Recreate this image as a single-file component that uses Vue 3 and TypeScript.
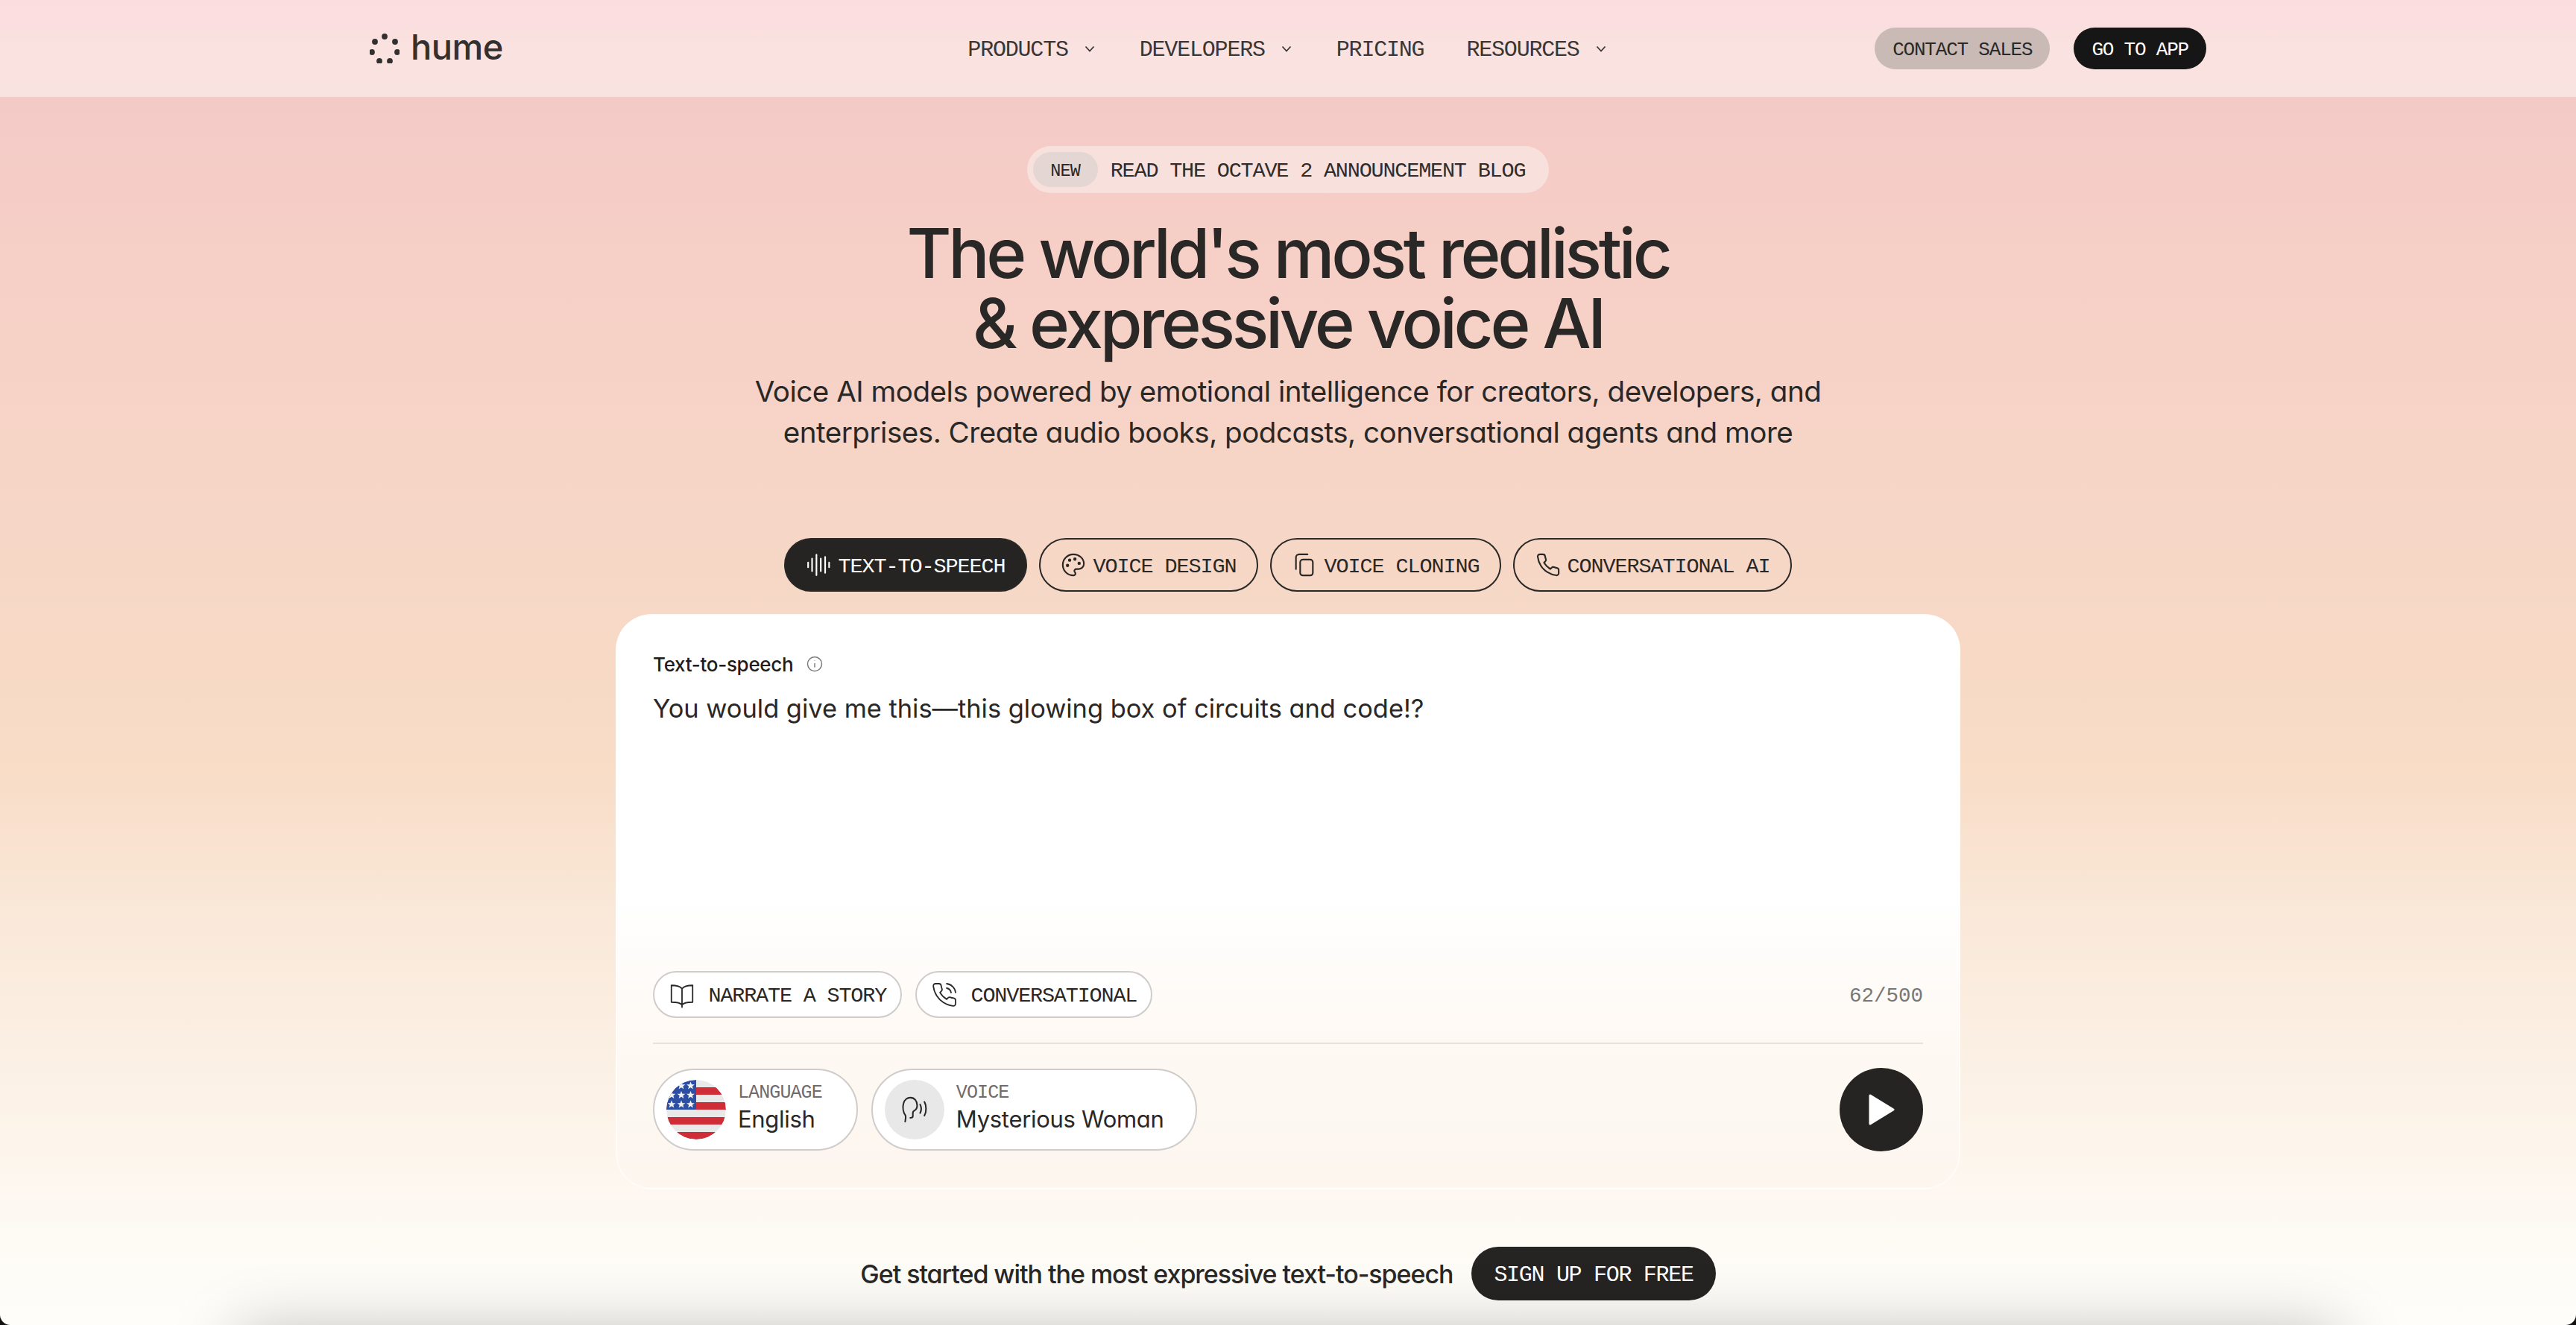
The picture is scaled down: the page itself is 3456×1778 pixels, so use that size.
<script setup lang="ts">
interface NavItem {
  label: string;
  menu: boolean;
}

const navItems: NavItem[] = [
  { label: 'PRODUCTS', menu: true },
  { label: 'DEVELOPERS', menu: true },
  { label: 'PRICING', menu: false },
  { label: 'RESOURCES', menu: true },
];

const logoDots = [
  [516, 47], [503, 54], [530, 54], [499, 68], [533, 68], [509, 80], [523, 80],
];

const stars = [
  [20, 8], [32.5, 8],
  [7, 20.5], [20, 20.5], [32.5, 20.5],
  [7, 33], [20, 33], [32.5, 33],
];
</script>

<template>
  <div class="page">
    <header class="topbar">
      <a class="logo">
        <svg class="logo__mark" viewBox="496 43 40 40" width="40" height="40">
          <circle v-for="(d, i) in logoDots" :key="i" :cx="d[0]" :cy="d[1]" r="3.9" />
        </svg>
        <span class="logo__word">hume</span>
      </a>

      <nav class="nav">
        <a v-for="item in navItems" :key="item.label" class="nav__item">
          <span class="nudge">{{ item.label }}</span>
          <svg v-if="item.menu" class="nav__chev" viewBox="0 0 20 20" width="20" height="20">
            <path d="M4.500 7.500 10 13.500l5.500-6" />
          </svg>
        </a>
      </nav>

      <div class="topbar__actions">
        <a class="btn btn--soft"><span class="nudge">CONTACT SALES</span></a>
        <a class="btn btn--dark"><span class="nudge">GO TO APP</span></a>
      </div>
    </header>

    <main class="hero">
      <a class="announce">
        <span class="announce__tag"><span class="nudge">NEW</span></span>
        <span class="announce__text nudge">READ THE OCTAVE 2 ANNOUNCEMENT BLOG</span>
      </a>

      <h1 class="hero__title">The world's most realistic<br />&amp; expressive voice AI</h1>
      <p class="hero__sub">
        Voice AI models powered by emotional intelligence for creators, developers, and<br />
        enterprises. Create audio books, podcasts, conversational agents and more
      </p>

      <div class="tabs">
        <button class="tab tab--active">
          <svg class="tab__icon" viewBox="0 0 32 32" width="34" height="34">
            <path d="M3 13v6M8 8v16M13.500 3v26M19 8v16M24.500 6v20M29.500 13v6" />
          </svg>
          <span class="nudge">TEXT-TO-SPEECH</span>
        </button>
        <button class="tab">
          <svg class="tab__icon" viewBox="0 0 24 24" width="34" height="34">
            <path d="M12 22a1 1 0 0 1 0-20 10 9 0 0 1 10 9 5 5 0 0 1-5 5h-2.250a1.750 1.750 0 0 0-1.400 2.800l.3.4a1.750 1.750 0 0 1-1.400 2.800z" />
            <circle class="dot" cx="13.500" cy="6.500" r=".8" />
            <circle class="dot" cx="17.500" cy="10.500" r=".8" />
            <circle class="dot" cx="6.500" cy="12.500" r=".8" />
            <circle class="dot" cx="8.500" cy="7.500" r=".8" />
          </svg>
          <span class="nudge">VOICE DESIGN</span>
        </button>
        <button class="tab">
          <svg class="tab__icon" viewBox="0 0 24 24" width="34" height="34">
            <rect x="8" y="7" width="12" height="15" rx="2.500" />
            <path d="M4 16V5a3 3 0 0 1 3-3h8" />
          </svg>
          <span class="nudge">VOICE CLONING</span>
        </button>
        <button class="tab">
          <svg class="tab__icon" viewBox="0 0 24 24" width="34" height="34">
            <path d="M22 16.920v3a2 2 0 0 1-2.180 2 19.790 19.790 0 0 1-8.630-3.070 19.500 19.500 0 0 1-6-6 19.790 19.790 0 0 1-3.070-8.670A2 2 0 0 1 4.110 2h3a2 2 0 0 1 2 1.720 12.840 12.840 0 0 0 .7 2.810 2 2 0 0 1-.45 2.110L8.090 9.910a16 16 0 0 0 6 6l1.270-1.270a2 2 0 0 1 2.110-.45 12.840 12.840 0 0 0 2.810.7A2 2 0 0 1 22 16.920z" />
          </svg>
          <span class="nudge">CONVERSATIONAL AI</span>
        </button>
      </div>

      <section class="card">
        <div class="card__label">
          <span>Text-to-speech</span>
          <svg class="info" viewBox="0 0 22 22" width="22" height="22">
            <circle cx="11" cy="11" r="9.500" />
            <path d="M11 10v5.500M11 6.500v.6" />
          </svg>
        </div>
        <div class="card__text">You would give me this—this glowing box of circuits and code!?</div>

        <div class="card__chips">
          <button class="chip">
            <svg class="chip__icon" viewBox="0 0 24 24" width="36" height="36">
              <path d="M12 6.500C10.500 4.500 8 3.500 2.500 3.500v15c5.500 0 8 .5 9.500 2.500 1.500-2 4-2.500 9.500-2.500v-15c-5.500 0-8 1-9.500 3zM12 6.500V23" />
            </svg>
            <span class="nudge">NARRATE A STORY</span>
          </button>
          <button class="chip">
            <svg class="chip__icon" viewBox="0 0 24 24" width="36" height="36">
              <path d="M22 16.920v3a2 2 0 0 1-2.180 2 19.790 19.790 0 0 1-8.630-3.070 19.500 19.500 0 0 1-6-6 19.790 19.790 0 0 1-3.070-8.670A2 2 0 0 1 4.110 2h3a2 2 0 0 1 2 1.720 12.840 12.840 0 0 0 .7 2.810 2 2 0 0 1-.45 2.110L8.090 9.910a16 16 0 0 0 6 6l1.270-1.270a2 2 0 0 1 2.110-.45 12.840 12.840 0 0 0 2.810.7A2 2 0 0 1 22 16.920z" />
              <path d="M14.050 2a9 9 0 0 1 8 7.940M14.050 6A5 5 0 0 1 18 10" />
            </svg>
            <span class="nudge">CONVERSATIONAL</span>
          </button>
          <span class="counter nudge">62/500</span>
        </div>

        <div class="card__controls">
          <button class="picker">
            <svg class="picker__media" viewBox="0 0 80 80" width="80" height="80">
              <defs>
                <clipPath id="flag-clip"><circle cx="40" cy="40" r="40" /></clipPath>
              </defs>
              <g clip-path="url(#flag-clip)">
                <rect width="80" height="80" fill="#e9e9e9" />
                <rect v-for="y in [10, 30, 50, 70]" :key="y" y="0" width="80" height="10" :transform="`translate(0 ${y})`" fill="#cf2e38" />
                <rect width="40" height="40" fill="#2c4fa3" />
                <polygon
                  v-for="(s, i) in stars"
                  :key="i"
                  :transform="`translate(${s[0]} ${s[1]})`"
                  fill="#f1f1f1"
                  points="0,-5.500 1.500,-1.700 5.400,-1.700 2.300,.7 3.400,4.500 0,2.300 -3.400,4.500 -2.300,.7 -5.400,-1.700 -1.500,-1.700"
                />
              </g>
            </svg>
            <span class="picker__body">
              <span class="picker__kicker">LANGUAGE</span>
              <span class="picker__value">English</span>
            </span>
          </button>
          <button class="picker">
            <span class="picker__media picker__media--voice">
              <svg viewBox="0 0 40 40" width="46" height="46">
                <path d="M9 34c.5-3 1-5 .5-7C6.500 23 6 17 7 13c1-5 5-7 8-7 5 0 8 4 8 9 0 3-1 5-3 6-1.500 .7-2 1.500-2 3v3.500c0 1.500-1 2-3 2" />
                <path d="M26.500 14c1.500 3 1.500 7 0 10M31.500 11c2.500 4 2.500 12 0 16" />
              </svg>
            </span>
            <span class="picker__body">
              <span class="picker__kicker">VOICE</span>
              <span class="picker__value">Mysterious Woman</span>
            </span>
          </button>
          <button class="play" aria-label="Play">
            <svg viewBox="0 0 40 48" width="40" height="48">
              <path d="M5 5 36 24 5 43z" />
            </svg>
          </button>
        </div>
      </section>

      <div class="cta">
        <span class="cta__text">Get started with the most expressive text-to-speech</span>
        <a class="cta__btn"><span class="nudge">SIGN UP FOR FREE</span></a>
      </div>

      <div class="next-panel"></div>
    </main>
  </div>
</template>

<style>
html,
body {
  margin: 0;
  background: #111;
}
</style>

<style scoped>
.page {
  height: 1778px;
  overflow: hidden;
  border-radius: 0 0 14px 14px;
  color: #2a2827;
  font-family: Inter, "Noto Sans", sans-serif;
  font-feature-settings: "cv11" 1;
  background: linear-gradient(
    180deg,
    #f4cac6 0,
    #f4cac6 130px,
    #f6cfc6 340px,
    #f6d6c6 680px,
    #f8dcc6 1020px,
    #fae9da 1247px,
    #fcf2e7 1474px,
    #fefcf7 1700px,
    #fefdf9 1778px
  );
}

/* mono caps sit a touch high in Liberation Mono */
.nudge {
  display: block;
  padding-top: 4px;
}

.topbar {
  height: 130px;
  box-sizing: border-box;
  padding: 0 496px;
  display: grid;
  grid-template-columns: 1fr auto 1fr;
  align-items: center;
  background: linear-gradient(180deg, #fbdde0 0, #fbdee0 30px, #f9e2df 60px, #f9e3df 130px);
}

.logo {
  display: flex;
  align-items: center;
  gap: 15px;
}

.logo__mark circle {
  fill: #33302f;
}

.logo__word {
  font-size: 47px;
  font-weight: 500;
  line-height: 1;
  letter-spacing: -0.5px;
  color: #33302f;
  margin-top: -6px;
}

.nav {
  display: flex;
  gap: 57px;
}

.nav__item {
  display: flex;
  align-items: center;
  font-family: "Liberation Mono", monospace;
  font-size: 30px;
  letter-spacing: -1.2px;
  color: #3a3634;
}

.nav__chev {
  margin-left: 19px;
  fill: none;
  stroke: #3a3634;
  stroke-width: 1.800;
}

.topbar__actions {
  display: flex;
  justify-content: flex-end;
  gap: 32px;
}

.btn {
  height: 56px;
  display: flex;
  align-items: center;
  padding: 0 24px;
  border-radius: 28px;
  font-family: "Liberation Mono", monospace;
  font-size: 26px;
  letter-spacing: -1.2px;
}

.btn--soft {
  background: #c9bab6;
  color: #2a2827;
}

.btn--dark {
  background: #161616;
  color: #fff;
}

.hero {
  display: flex;
  flex-direction: column;
  align-items: center;
}

.announce {
  margin-top: 66px;
  height: 63px;
  box-sizing: border-box;
  padding: 0 32px 0 8px;
  display: flex;
  align-items: center;
  gap: 17px;
  border-radius: 32px;
  background: #f8e0dc;
  font-family: "Liberation Mono", monospace;
}

.announce__tag {
  width: 87px;
  height: 47px;
  display: flex;
  align-items: center;
  justify-content: center;
  border-radius: 24px;
  background: #e4d6d2;
  font-size: 23.500px;
  letter-spacing: -0.8px;
}

.announce__text {
  font-size: 28.500px;
  letter-spacing: -1.2px;
  color: #2f2c2b;
}

.hero__title {
  margin: 34px 0 0;
  font-size: 92px;
  line-height: 94px;
  font-weight: 500;
  letter-spacing: -4.300px;
  text-align: center;
}

.hero__sub {
  margin: 17px 0 0;
  font-size: 38.600px;
  line-height: 55px;
  text-align: center;
  letter-spacing: -0.500px;
}

.tabs {
  margin-top: 114px;
  display: flex;
  gap: 16px;
}

.tab {
  height: 72px;
  box-sizing: border-box;
  padding: 0 27.500px;
  display: flex;
  align-items: center;
  gap: 9px;
  border: 2.500px solid #2a2827;
  border-radius: 36px;
  background: transparent;
  font-family: "Liberation Mono", monospace;
  font-size: 28.500px;
  letter-spacing: -1.1px;
  color: #2a2827;
}

.tab--active {
  background: #262423;
  color: #fff;
}

.tab__icon {
  fill: none;
  stroke: currentColor;
  stroke-width: 1.500;
  stroke-linecap: round;
  stroke-linejoin: round;
}

.tab__icon .dot {
  fill: currentColor;
}

.tab--active .tab__icon {
  stroke-width: 2;
}

.card {
  margin-top: 30px;
  width: 1804px;
  height: 772px;
  box-sizing: border-box;
  padding: 45px 48px 49px;
  display: flex;
  flex-direction: column;
  border: 2px solid rgba(255, 255, 255, 0.6);
  border-radius: 48px;
  background: linear-gradient(180deg, #fff 0, #fff 380px, #fef9f4 560px, #fdf6ef 100%);
}

.card__label {
  height: 40px;
  display: flex;
  align-items: center;
  gap: 18px;
  font-size: 26px;
  font-weight: 500;
  letter-spacing: -0.300px;
  color: #1f1d1c;
}

.info {
  fill: none;
  stroke: #777;
  stroke-width: 1.400;
}

.card__text {
  margin-top: 15px;
  flex: 1;
  font-size: 34.400px;
  line-height: 50px;
  color: #2a2827;
}

.card__chips {
  display: flex;
  align-items: center;
  gap: 18px;
}

.chip {
  height: 63px;
  box-sizing: border-box;
  padding: 0 19px;
  display: flex;
  align-items: center;
  gap: 17.500px;
  border: 2px solid #cfcccb;
  border-radius: 32px;
  background: #fff;
  font-family: "Liberation Mono", monospace;
  font-size: 28.500px;
  letter-spacing: -1.2px;
  color: #2a2827;
}

.chip__icon {
  fill: none;
  stroke: #2a2827;
  stroke-width: 1.200;
  stroke-linecap: round;
  stroke-linejoin: round;
}

.counter {
  margin-left: auto;
  font-family: "Liberation Mono", monospace;
  font-size: 27.500px;
  color: #777;
}

.card__controls {
  margin-top: 33px;
  padding-top: 32px;
  border-top: 2px solid #e6e2de;
  display: flex;
  align-items: center;
  gap: 18px;
}

.picker {
  height: 110px;
  box-sizing: border-box;
  padding: 0 42px 0 16px;
  display: flex;
  align-items: center;
  gap: 16px;
  border: 2px solid #cfcccb;
  border-radius: 55px;
  background: #fff;
  font-family: inherit;
  font-feature-settings: inherit;
  color: #2a2827;
}

.picker:first-child {
  padding-right: 46px;
}

.picker__media {
  flex: none;
  width: 80px;
  height: 80px;
  border-radius: 50%;
}

.picker__media--voice {
  display: flex;
  align-items: center;
  justify-content: center;
  background: #e8e8e8;
}

.picker__media--voice svg {
  fill: none;
  stroke: #2a2827;
  stroke-width: 1.800;
  stroke-linecap: round;
  stroke-linejoin: round;
}

.picker__body {
  display: flex;
  flex-direction: column;
  align-items: flex-start;
  padding-bottom: 4px;
}

.picker__kicker {
  font-family: "Liberation Mono", monospace;
  font-size: 25px;
  letter-spacing: -0.9px;
  line-height: 30px;
  color: #6f6c6b;
}

.picker__value {
  font-size: 31px;
  line-height: 40px;
  letter-spacing: -0.300px;
}

.play {
  margin-left: auto;
  width: 112px;
  height: 112px;
  padding: 0;
  display: flex;
  align-items: center;
  justify-content: center;
  border: 0;
  border-radius: 50%;
  background: #262423;
}

.play path {
  fill: #fff;
  stroke: #fff;
  stroke-width: 3;
  stroke-linejoin: round;
}

.cta {
  margin-top: 77px;
  display: flex;
  align-items: center;
  gap: 25px;
}

.cta__text {
  font-size: 34px;
  font-weight: 500;
  letter-spacing: -1.050px;
  color: #2a2827;
}

.cta__btn {
  height: 72px;
  display: flex;
  align-items: center;
  padding: 0 30px;
  border-radius: 36px;
  background: #262423;
  color: #fff;
  font-family: "Liberation Mono", monospace;
  font-size: 30px;
  letter-spacing: -1.300px;
}

.next-panel {
  flex: none;
  margin-top: 45px;
  width: 2816px;
  height: 200px;
  background: #e2e2e0;
  box-shadow: 0 0 90px rgba(0, 0, 0, 0.28);
}
</style>
